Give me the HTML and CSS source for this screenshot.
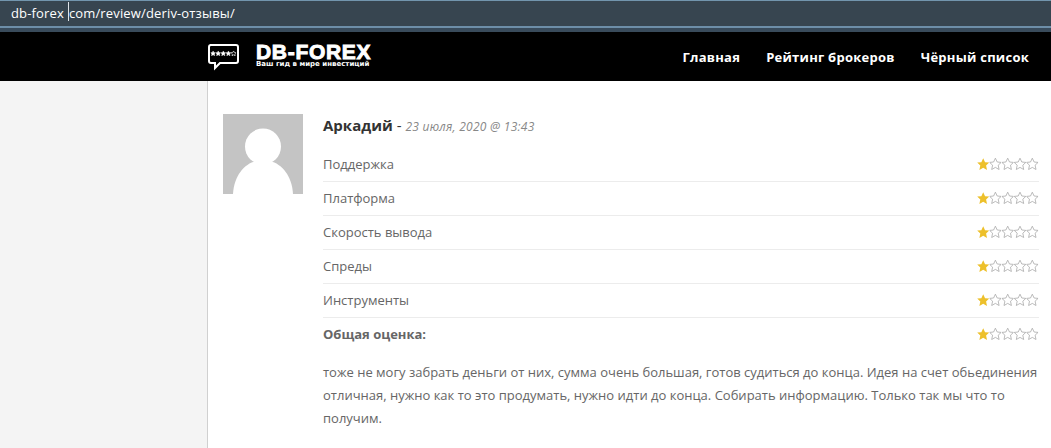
FILE: index.html
```html
<!DOCTYPE html>
<html lang="ru">
<head>
    <meta charset="UTF-8">
    <meta name="viewport" content="width=device-width, initial-scale=1.0">
    <title>Deriv отзывы - DB-FOREX</title>
    <link rel="stylesheet" href="styles.css">
</head>
<body>
    <svg width="0" height="0" class="symbols">
        <symbol id="star" viewBox="0 0 12 12">
            <path d="M6 .2 7.8 4 11.8 4.4 8.8 7.2 9.7 11.5 6 9.4 2.3 11.5 3.2 7.2 .2 4.4 4.2 4Z"/>
        </symbol>
        <symbol id="stars" viewBox="0 0 62 12">
            <use href="#star" class="full" x="0" width="12.4" height="12.4"/>
            <use href="#star" class="empty" x="12.4" width="12" height="12"/>
            <use href="#star" class="empty" x="24.7" width="12" height="12"/>
            <use href="#star" class="empty" x="37" width="12" height="12"/>
            <use href="#star" class="empty" x="49.3" width="12" height="12"/>
        </symbol>
    </svg>

    <div class="address-bar"><span>db-forex</span><i class="caret"></i><span>com/review/deriv-отзывы/</span></div>

    <header class="header">
        <a class="logo">
            <svg class="logo-icon" width="34" height="28" viewBox="0 0 34 28">
                <path d="M4 2H30Q32 2 32 4V18Q32 20 30 20H14L9 25V20H5Q3 20 3 18V4Q3 2 5 2Z" fill="none" stroke="#fff" stroke-width="2"/>
                <g fill="#fff" stroke="#fff">
                    <use href="#star" x="4.5" y="7.8" width="5.2" height="5.2"/>
                    <use href="#star" x="9.6" y="7.8" width="5.2" height="5.2"/>
                    <use href="#star" x="14.7" y="7.8" width="5.2" height="5.2"/>
                    <use href="#star" x="19.8" y="7.8" width="5.2" height="5.2"/>
                </g>
                <use href="#star" x="25" y="7.8" width="5.2" height="5.2" fill="none" stroke="#fff" stroke-width="1.5"/>
            </svg>
            <span class="logo-text">
                <span class="logo-name">DB-FOREX</span>
                <span class="logo-slogan">Ваш гид в мире инвестиций</span>
            </span>
        </a>
        <nav class="menu">
            <a class="menu-home">Главная</a>
            <a class="menu-rating">Рейтинг брокеров</a>
            <a class="menu-black">Чёрный список</a>
        </nav>
    </header>

    <main class="content">
        <svg class="avatar" width="80" height="80" viewBox="0 0 80 80">
            <rect width="80" height="80" fill="#c4c4c4"/>
            <circle cx="40" cy="32.5" r="18" fill="#fff"/>
            <path d="M10 80C11 62 21 50 33 47H47C59 50 69 62 70 80Z" fill="#fff"/>
        </svg>
        <div class="review">
            <div class="meta"><strong>Аркадий</strong> - <em>23 июля, 2020 @ 13:43</em></div>
            <ul class="ratings">
                <li><span>Поддержка</span><svg class="stars"><use href="#stars"/></svg></li>
                <li><span>Платформа</span><svg class="stars"><use href="#stars"/></svg></li>
                <li><span>Скорость вывода</span><svg class="stars"><use href="#stars"/></svg></li>
                <li><span>Спреды</span><svg class="stars"><use href="#stars"/></svg></li>
                <li><span>Инструменты</span><svg class="stars"><use href="#stars"/></svg></li>
                <li class="total"><span>Общая оценка:</span><svg class="stars"><use href="#stars"/></svg></li>
            </ul>
            <p class="text">тоже не могу забрать деньги от них, сумма очень большая, готов судиться до конца. Идея на счет обьединения<br>отличная, нужно как то это продумать, нужно идти до конца. Собирать информацию. Только так мы что то<br>получим.</p>
        </div>
    </main>
</body>
</html>
```
FILE: styles.css
```css
* { box-sizing: border-box; }
body { margin: 0; height: 448px; overflow: hidden; display: flex; flex-direction: column; background: #f4f4f4; font-family: "Open Sans", sans-serif; font-size: 13px; color: #666; }
.symbols { position: absolute; }

.address-bar { height: 32px; flex: none; display: flex; align-items: flex-start; padding-left: 11px; background: linear-gradient(#7295ad 0 1px, #374550 1px 26px, #6d8ea8 26px 28px, #394b5b 28px); color: #fff; font-size: 13px; letter-spacing: .15px; line-height: 26px; white-space: nowrap; }
.caret { width: 1px; height: 19px; margin: 2px 0 0 4px; background: #dde3e8; }

.header { height: 49px; flex: none; display: flex; justify-content: space-between; background: #000; color: #fff; padding: 0 22px 0 206px; }
.logo { display: flex; }
.logo-icon { margin-top: 11px; }
.logo-text { display: flex; flex-direction: column; margin: 12px 0 0 16px; font-weight: bold; white-space: nowrap; }
.logo-name { font-family: "Liberation Sans", Arial, sans-serif; font-size: 21px; line-height: 16px; height: 16px; letter-spacing: .7px; -webkit-text-stroke: .9px #fff; }
.logo-slogan { font-family: "DejaVu Sans", sans-serif; font-size: 7px; line-height: 8px; letter-spacing: 0; }
.menu { display: flex; gap: 26px; font-family: "Open Sans", sans-serif; font-size: 13px; font-weight: 700; letter-spacing: .25px; line-height: 51px; white-space: nowrap; }

.content { flex: 1; margin-left: 207px; padding: 33px 12px 0 15px; display: flex; align-items: flex-start; gap: 20px; background: #fff; border-left: 1px solid #d0d0d0; }
.avatar { flex: none; }
.review { flex: 1; }
.meta { height: 34px; line-height: 23px; font-size: 15px; color: #333; }
.meta em { font-size: 12px; letter-spacing: .25px; color: #888; }
.ratings { list-style: none; margin: 0; padding: 0; }
.ratings li { display: flex; justify-content: space-between; align-items: center; height: 34px; padding-bottom: 1px; border-bottom: 1px solid #ececec; }
.ratings .total { padding-bottom: 2px; border-bottom: none; font-weight: bold; }
.stars { width: 62px; height: 12px; }
.full { fill: #edc02b; }
.empty { fill: #fff; stroke: #aaa; stroke-width: .8; }
.text { margin: 9px 0 0; line-height: 23px; white-space: nowrap; }
```
